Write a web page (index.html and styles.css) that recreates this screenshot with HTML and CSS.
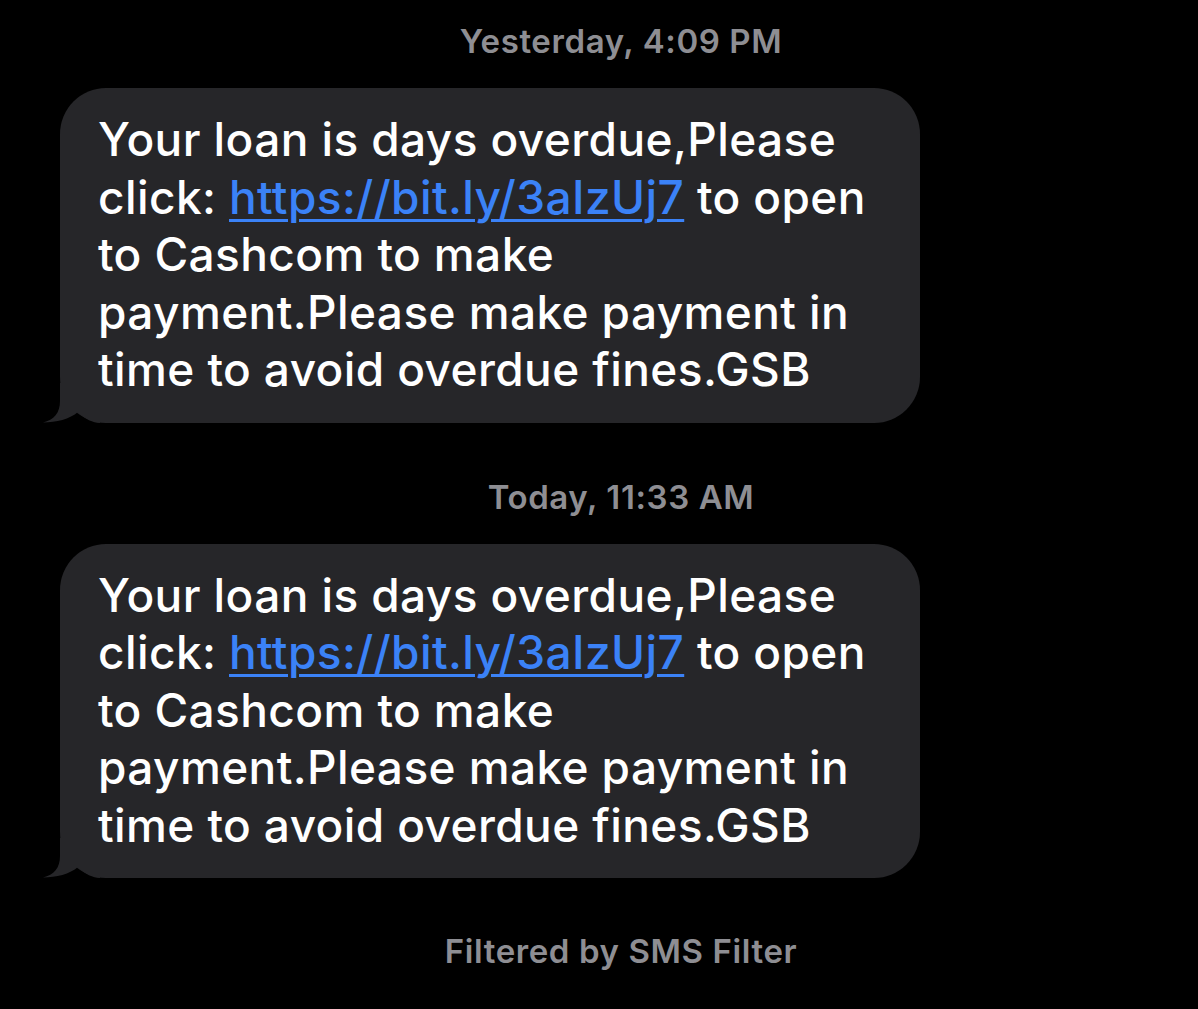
FILE: index.html
```html
<!DOCTYPE html>
<html lang="en">
<head>
    <meta charset="UTF-8">
    <meta name="viewport" content="width=device-width, initial-scale=1.0">
    <title>Messages</title>
    <link rel="stylesheet" href="styles.css">
</head>
<body>
    <main class="thread">
        <div class="stamp stamp-first">Yesterday, 4:09 PM</div>
        <div class="bubble">
            Your loan is days overdue,Please click: <a href="#">https://bit.ly/3aIzUj7</a> to open to Cashcom to make payment.Please make payment in time to avoid overdue fines.GSB
            <svg class="tail" width="57" height="40" viewBox="0 0 57 40">
                <path d="M17 0 L17 18 C17 30 11 37 0 39.5 C13 39.5 27 36 35 29 C42 36 50 40 57 40 L57 0 Z"/>
            </svg>
        </div>

        <div class="stamp">Today, 11:33 AM</div>
        <div class="bubble">
            Your loan is days overdue,Please click: <a href="#">https://bit.ly/3aIzUj7</a> to open to Cashcom to make payment.Please make payment in time to avoid overdue fines.GSB
            <svg class="tail" width="57" height="40" viewBox="0 0 57 40">
                <path d="M17 0 L17 18 C17 30 11 37 0 39.5 C13 39.5 27 36 35 29 C42 36 50 40 57 40 L57 0 Z"/>
            </svg>
        </div>

        <div class="stamp filter">Filtered by SMS Filter</div>
    </main>
</body>
</html>
```

FILE: styles.css
```css
body {
    margin: 0;
    padding: 0;
    background-color: #000;
    font-family: Inter, "Noto Sans", sans-serif;
    color: #fff;
}

.thread {
    display: flex;
    flex-direction: column;
    width: 1198px;
    height: 1009px;
    overflow: hidden;
}

.stamp {
    padding-left: 44px;
    text-align: center;
    color: #8e8e93;
    font-size: 33px;
    font-weight: 600;
    letter-spacing: 0.6px;
    line-height: 40px;
    margin-top: 54px;
    margin-bottom: 27px;
}

.stamp-first {
    margin-top: 21px;
}

.filter {
    margin-top: 53px;
    margin-bottom: 0;
}

.bubble {
    position: relative;
    box-sizing: border-box;
    width: 860px;
    margin-left: 60px;
    padding: 23px 26px 24px 38px;
    background-color: #262629;
    border-radius: 46px;
    font-size: 46px;
    font-weight: 500;
    letter-spacing: 0.4px;
    line-height: 57.5px;
}

.bubble a {
    color: #3b82f7;
    text-decoration: underline;
    text-decoration-thickness: 3px;
    text-underline-offset: 5px;
}

.tail {
    position: absolute;
    left: -17px;
    bottom: 0;
    display: block;
}

.tail path {
    fill: #262629;
}
```
